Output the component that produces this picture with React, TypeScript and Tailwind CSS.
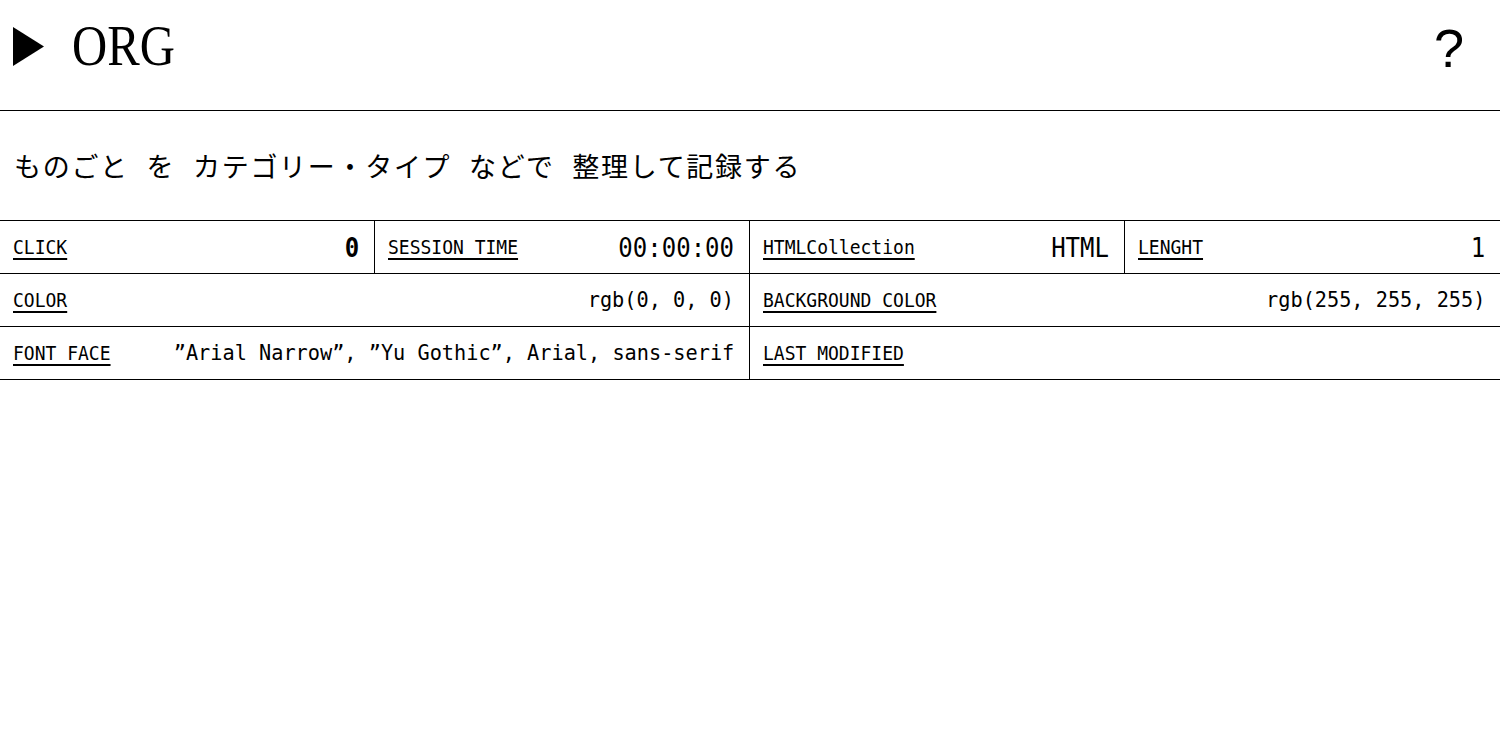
import React from 'react';

const mono = "font-['DejaVu_Sans_Mono','Liberation_Mono',monospace]";

function Label({ children }: { children: React.ReactNode }) {
  return (
    <span
      className={`${mono} origin-left scale-x-[0.9] text-[20px] leading-none underline underline-offset-[4px] decoration-[1.5px]`}
    >
      {children}
    </span>
  );
}

function Cell({
  label,
  value,
  valueClass = 'text-[22px] scale-x-[0.92]',
  className = '',
}: {
  label: string;
  value?: string;
  valueClass?: string;
  className?: string;
}) {
  return (
    <div className={`flex h-[52px] items-center justify-between pl-[13px] pr-[15px] ${className}`}>
      <Label>{label}</Label>
      {value !== undefined && (
        <span className={`${mono} origin-right whitespace-nowrap leading-none ${valueClass}`}>{value}</span>
      )}
    </div>
  );
}

export default function App() {
  return (
    <div className="min-h-screen bg-white text-black">
      <header className="flex h-[111px] items-start justify-between border-b border-black pt-[17px] pl-[13px] pr-[36px]">
        <div className="flex items-start gap-[28px]">
          <svg width="31" height="39" viewBox="0 0 31 39" className="mt-[10px]">
            <polygon points="0,0 31,19.5 0,39" fill="#000" />
          </svg>
          <span className="origin-left scale-x-[0.84] font-['Liberation_Serif','Times_New_Roman',serif] text-[58px] leading-none">
            ORG
          </span>
        </div>
        <span className="mt-[4px] font-['Liberation_Sans',Arial,sans-serif] text-[54px] leading-none">?</span>
      </header>

      <section className="flex h-[109px] items-center pl-[14px]">
        <p className="font-['Noto_Sans_CJK_JP',sans-serif] text-[27px] leading-none tracking-[1.7px] [word-spacing:10px]">
          ものごと を カテゴリー・タイプ などで 整理して記録する
        </p>
      </section>

      <div className="border-t border-black">
        <div className="grid grid-cols-4 border-b border-black">
          <Cell
            label="CLICK"
            value="0"
            valueClass="text-[27px] scale-x-[0.89] font-bold"
            className="border-r border-black"
          />
          <Cell
            label="SESSION TIME"
            value="00:00:00"
            valueClass="text-[27px] scale-x-[0.89]"
            className="border-r border-black"
          />
          <Cell
            label="HTMLCollection"
            value="HTML"
            valueClass="text-[27px] scale-x-[0.89]"
            className="border-r border-black"
          />
          <Cell label="LENGHT" value="1" valueClass="text-[27px] scale-x-[0.89]" />
        </div>
        <div className="grid grid-cols-2 border-b border-black">
          <Cell label="COLOR" value="rgb(0, 0, 0)" className="border-r border-black" />
          <Cell label="BACKGROUND COLOR" value="rgb(255, 255, 255)" />
        </div>
        <div className="grid grid-cols-2 border-b border-black">
          <Cell
            label="FONT FACE"
            value={'\u201dArial Narrow\u201d, \u201dYu Gothic\u201d, Arial, sans-serif'}
            className="border-r border-black"
          />
          <Cell label="LAST MODIFIED" />
        </div>
      </div>
    </div>
  );
}
